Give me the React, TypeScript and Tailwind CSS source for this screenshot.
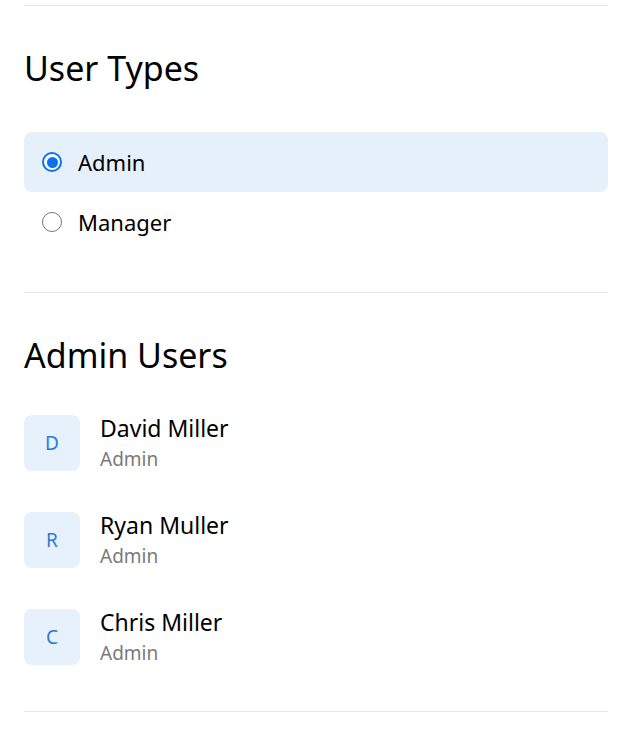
import { useState } from 'react'

type User = {
  name: string
  role: string
}

const userTypes = ['Admin', 'Manager']

const adminUsers: User[] = [
  { name: 'David Miller', role: 'Admin' },
  { name: 'Ryan Muller', role: 'Admin' },
  { name: 'Chris Miller', role: 'Admin' },
]

function Radio({ checked }: { checked: boolean }) {
  if (checked) {
    return (
      <span className="flex h-[20px] w-[20px] shrink-0 items-center justify-center rounded-full border-2 border-[#0a72ef] bg-white">
        <span className="h-[11px] w-[11px] rounded-full bg-[#0a72ef]" />
      </span>
    )
  }
  return (
    <span className="h-[20px] w-[20px] shrink-0 rounded-full border-[1.5px] border-[#767676] bg-white" />
  )
}

function UserRow({ user }: { user: User }) {
  return (
    <div className="flex h-[56px] items-center gap-5">
      <div className="flex h-[56px] w-[56px] shrink-0 items-center justify-center rounded-lg bg-[#e7f1fc] text-[19px] text-[#2d7ad6]">
        {user.name[0]}
      </div>
      <div className="flex flex-col">
        <span className="text-[23px] leading-[26px] text-black">{user.name}</span>
        <span className="mt-[6px] text-[19px] leading-[24px] text-[#7a7a7a]">{user.role}</span>
      </div>
    </div>
  )
}

export default function App() {
  const [selected, setSelected] = useState('Admin')

  return (
    <div className="min-h-[740px] bg-white pt-[5px] pl-6 pr-[26px] font-['Noto_Sans',sans-serif]">
      <div className="h-px bg-[#e6e6ea]" />

      <section className="pt-[42px] pb-[40px]">
        <h2 className="text-[34px] leading-[40px] text-black">User Types</h2>
        <div className="mt-[44px] flex flex-col">
          {userTypes.map((type) => {
            const active = type === selected
            return (
              <button
                key={type}
                onClick={() => setSelected(type)}
                className={
                  active
                    ? 'flex h-[60px] items-center gap-4 rounded-lg bg-[#e6f0fb] pl-[18px] text-left'
                    : 'flex h-[60px] items-center gap-4 rounded-lg pl-[18px] text-left'
                }
              >
                <Radio checked={active} />
                <span className="text-[22px] text-black">{type}</span>
              </button>
            )
          })}
        </div>
      </section>

      <div className="h-px bg-[#e6e6ea]" />

      <section className="pt-[42px] pb-[46px]">
        <h2 className="text-[34px] leading-[40px] text-black">Admin Users</h2>
        <div className="mt-[40px] flex flex-col gap-[41px]">
          {adminUsers.map((u) => (
            <UserRow key={u.name} user={u} />
          ))}
        </div>
      </section>

      <div className="h-px bg-[#e6e6ea]" />
    </div>
  )
}
